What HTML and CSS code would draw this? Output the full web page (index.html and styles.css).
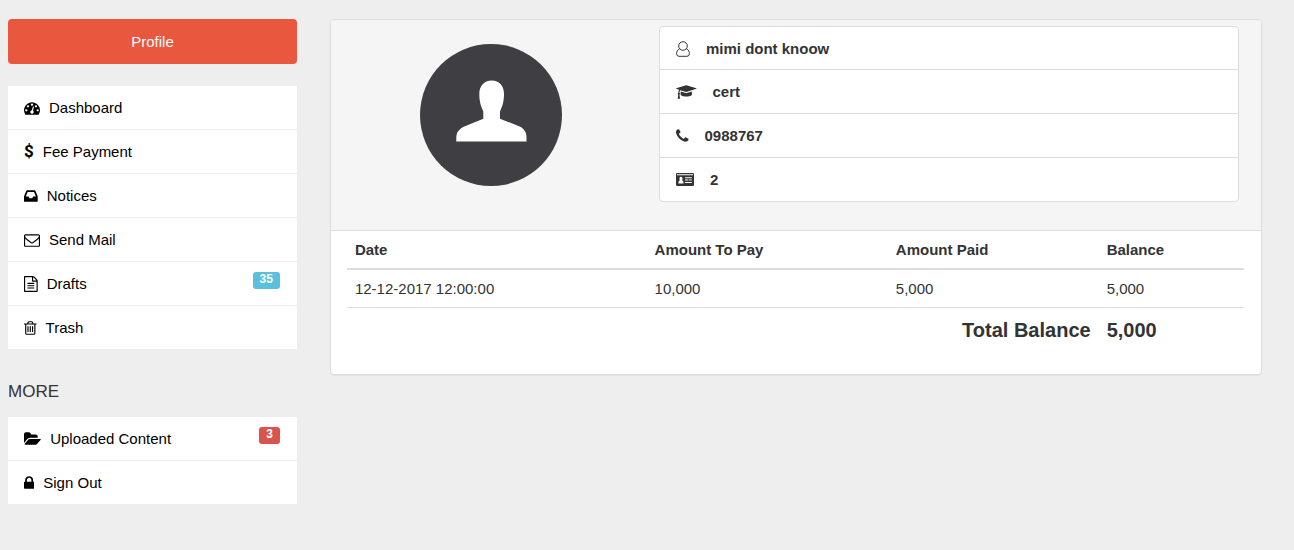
FILE: index.html
```html
<!DOCTYPE html>
<html lang="en">
<head>
    <meta charset="UTF-8">
    <meta name="viewport" content="width=device-width, initial-scale=1.0">
    <title>Profile</title>
    <link rel="stylesheet" href="styles.css">
</head>
<body>
    <div class="page">
        <aside class="sidebar">
            <button type="button" class="btn-profile">Profile</button>
            <nav class="menu">
                <a href="#">
                    <svg class="icon" viewBox="0 0 1792 1792"><path d="M384 1152q0-53-37.5-90.5t-90.5-37.5-90.5 37.5-37.5 90.5 37.5 90.5 90.5 37.5 90.5-37.5 37.5-90.5zm192-448q0-53-37.5-90.5t-90.5-37.5-90.5 37.5-37.5 90.5 37.5 90.5 90.5 37.5 90.5-37.5 37.5-90.5zm428 481l101-382q6-26-7.5-48.5t-38.5-29.5-48 6.5-30 39.5l-101 382q-60 5-107 43.5t-63 98.5q-20 77 20 146t117 89 146-20 89-117q16-60-6-117t-72-91zm660-33q0-53-37.5-90.5t-90.5-37.5-90.5 37.5-37.5 90.5 37.5 90.5 90.5 37.5 90.5-37.5 37.5-90.5zm-640-640q0-53-37.5-90.5t-90.5-37.5-90.5 37.5-37.5 90.5 37.5 90.5 90.5 37.5 90.5-37.5 37.5-90.5zm448 192q0-53-37.5-90.5t-90.5-37.5-90.5 37.5-37.5 90.5 37.5 90.5 90.5 37.5 90.5-37.5 37.5-90.5zm320 448q0 261-141 483-19 29-54 29h-1402q-35 0-54-29-141-221-141-483 0-182 71-348t191-286 286-191 348-71 348 71 286 191 191 286 71 348z"/></svg>
                    Dashboard
                </a>
                <a href="#">
                    <span class="dollar">$</span>
                    Fee Payment
                </a>
                <a href="#">
                    <svg class="icon" viewBox="128 0 1536 1792"><path d="M1151 960h316q-1-3-2.5-8.5t-2.5-7.5l-212-496h-708l-212 496q-1 3-2.5 8.5t-2.5 7.5h316l95 192h320zm513 30v482q0 26-19 45t-45 19h-1408q-26 0-45-19t-19-45v-482q0-62 25-123l238-552q10-25 36.5-42t52.5-17h832q26 0 52.5 17t36.5 42l238 552q25 61 25 123z"/></svg>
                    Notices
                </a>
                <a href="#">
                    <svg class="icon" viewBox="0 0 1792 1792"><path d="M1664 1504v-768q-32 36-69 66-268 206-426 338-51 43-83 67t-86.5 48.5-102.5 24.5h-2q-48 0-102.5-24.5t-86.5-48.5-83-67q-158-132-426-338-37-30-69-66v768q0 13 9.5 22.5t22.5 9.5h1472q13 0 22.5-9.5t9.5-22.5zm0-1051v-24.5l-.5-13-3-12.5-5.5-9-9-7.5-14-2.5h-1472q-13 0-22.5 9.5t-9.5 22.5q0 168 147 284 193 152 401 317 6 5 35 29.5t46 37.5 44.5 31.5 50.5 27.5 43 9h2q20 0 43-9t50.5-27.5 44.5-31.5 46-37.5 35-29.5q208-165 401-317 54-43 100.5-115.5t46.5-131.5zm128-37v1088q0 66-47 113t-113 47h-1472q-66 0-113-47t-47-113v-1088q0-66 47-113t113-47h1472q66 0 113 47t47 113z"/></svg>
                    Send Mail
                </a>
                <a href="#">
                    <svg class="icon" viewBox="128 0 1536 1792"><path d="M1596 380q28 28 48 76t20 88v1152q0 40-28 68t-68 28h-1344q-40 0-68-28t-28-68v-1600q0-40 28-68t68-28h896q40 0 88 20t76 48zm-444-244v376h376q-10-29-22-41l-313-313q-12-12-41-22zm384 1528v-1024h-416q-40 0-68-28t-28-68v-416h-768v1536h1280zm-1024-864q0-14 9-23t23-9h704q14 0 23 9t9 23v64q0 14-9 23t-23 9h-704q-14 0-23-9t-9-23v-64zm736 224q14 0 23 9t9 23v64q0 14-9 23t-23 9h-704q-14 0-23-9t-9-23v-64q0-14 9-23t23-9h704zm0 256q14 0 23 9t9 23v64q0 14-9 23t-23 9h-704q-14 0-23-9t-9-23v-64q0-14 9-23t23-9h704z"/></svg>
                    Drafts
                    <span class="badge badge-info">35</span>
                </a>
                <a href="#">
                    <svg class="icon" viewBox="192 0 1408 1792"><path d="M704 736v576q0 14-9 23t-23 9h-64q-14 0-23-9t-9-23v-576q0-14 9-23t23-9h64q14 0 23 9t9 23zm256 0v576q0 14-9 23t-23 9h-64q-14 0-23-9t-9-23v-576q0-14 9-23t23-9h64q14 0 23 9t9 23zm256 0v576q0 14-9 23t-23 9h-64q-14 0-23-9t-9-23v-576q0-14 9-23t23-9h64q14 0 23 9t9 23zm128 724v-948h-896v948q0 22 7 40.5t14.5 27 10.5 8.5h832q3 0 10.5-8.5t14.5-27 7-40.5zm-672-1076h448l-48-117q-7-9-17-11h-317q-10 2-17 11zm928 32v64q0 14-9 23t-23 9h-96v948q0 83-47 143.5t-113 60.5h-832q-66 0-113-58.5t-47-141.5v-952h-96q-14 0-23-9t-9-23v-64q0-14 9-23t23-9h309l70-167q15-37 54-63t79-26h320q40 0 79 26t54 63l70 167h309q14 0 23 9t9 23z"/></svg>
                    Trash
                </a>
            </nav>
            <h2 class="more">MORE</h2>
            <nav class="menu">
                <a href="#">
                    <svg class="icon" viewBox="0 0 1920 1792"><path d="M1879 952q0 31-31 66l-336 396q-43 51-120.5 86.5t-143.5 35.5h-1088q-34 0-60.5-13t-26.5-43q0-31 31-66l336-396q43-51 120.5-86.5t143.5-35.5h1088q34 0 60.5 13t26.5 43zm-343-344v160h-832q-94 0-197 47.5t-164 119.5l-337 396-5 6q0-4-.5-12.5t-.5-12.5v-960q0-92 66-158t158-66h320q92 0 158 66t66 158v32h544q92 0 158 66t66 158z"/></svg>
                    Uploaded Content
                    <span class="badge badge-danger">3</span>
                </a>
                <a href="#">
                    <svg class="icon" viewBox="320 0 1152 1792"><path d="M640 768h512v-192q0-106-75-181t-181-75-181 75-75 181v192zm832 96v576q0 40-28 68t-68 28h-960q-40 0-68-28t-28-68v-576q0-40 28-68t68-28h32v-192q0-184 132-316t316-132 316 132 132 316v192h32q40 0 68 28t28 68z"/></svg>
                    Sign Out
                </a>
            </nav>
        </aside>

        <main class="panel">
            <div class="panel-top">
                <svg class="avatar" viewBox="0 0 142 142">
                    <circle cx="71" cy="71" r="71" fill="#3e3e43"/>
                    <path fill="#fff" d="M71.7 36.5C64 36.5 59.3 42 59.3 50C59.3 58 61 62 63.3 67.5V74.7L43 83Q36.3 87 36.3 93V97.5H106.5V93Q106.5 87 101 83L80 74.7V67.5C82.3 62 84 58 84 50C84 42 79.5 36.5 71.7 36.5Z"/>
                </svg>
                <ul class="info">
                    <li>
                        <svg class="icon icon-line" viewBox="0 0 14 16"><path d="M3.6 7.8C1.2 8.600 .6 10.800 .6 12.700Q.6 15.300 3 15.300H11Q13.400 15.300 13.400 12.700C13.400 10.800 12.800 8.600 10.400 7.800"/><circle cx="7" cy="5" r="4.300"/></svg>
                        mimi dont knoow
                    </li>
                    <li>
                        <svg class="icon" viewBox="0 0 2304 1792"><path d="M1774 836l18 316q4 69-82 128t-235 93.5-323 34.5-323-34.5-235-93.5-82-128l18-316 574 181q22 7 48 7t48-7zm530-324q0 23-22 31l-1120 352q-4 1-10 1t-10-1l-652-206q-43 34-71 111.5t-34 178.5q63 36 63 109 0 69-58 107l58 433q2 14-8 25-9 11-24 11h-192q-15 0-24-11-10-11-8-25l58-433q-58-38-58-107 0-73 65-111 11-207 98-330l-333-104q-22-8-22-31t22-31l1120-352q4-1 10-1t10 1l1120 352q22 8 22 31z"/></svg>
                        cert
                    </li>
                    <li>
                        <svg class="icon" viewBox="192 0 1408 1792"><path d="M1600 1240q0 27-10 70.5t-21 68.5q-21 50-122 106-94 51-186 51-27 0-52.5-3.5t-57.5-12.5-47.5-14.5-55.5-20.5-49-18q-98-35-175-83-128-79-264.5-215.5t-215.5-264.5q-48-77-83-175-3-9-18-49t-20.5-55.5-14.5-47.5-12.5-57.5-3.5-52.5q0-92 51-186 56-101 106-122 25-11 68.5-21t70.5-10q14 0 21 3 18 6 53 76 11 19 30 54t35 63.5 31 53.5q3 4 17.5 25t21.5 35.5 7 28.5q0 20-28.5 50t-62 55-62 53-28.5 46q0 9 5 22.5t8.5 20.5 14 24 11.5 19q76 137 174 235t235 174q2 1 19 11.5t24 14 20.5 8.5 22.5 5q18 0 46-28.5t53-62 55-62 50-28.5q14 0 28.5 7t35.5 21.5 25 17.5q25 15 53.5 31t63.5 35 54 30q70 35 76 53 3 7 3 21z"/></svg>
                        0988767
                    </li>
                    <li>
                        <svg class="icon" viewBox="0 0 18 16"><rect y="1" width="18" height="13" rx="1.3"/><path fill="#fff" d="M1 2.2h16v1H1zM2.4 11.4c0-2 .6-2.8 1.4-3C3 6.5 3.700 4.800 5 4.800s2 1.700 1.200 3.600c.8.2 1.400 1 1.400 3zM9 5.200h6.800v1H9zM9 7.600h3.400v1H9zM13.200 7.600h2.600v1h-2.600zM9 10h6.800v1H9z"/></svg>
                        2
                    </li>
                </ul>
            </div>
            <div class="panel-body">
                <table class="fees">
                    <thead>
                        <tr>
                            <th class="col-date">Date</th>
                            <th class="col-due">Amount To Pay</th>
                            <th class="col-paid">Amount Paid</th>
                            <th>Balance</th>
                        </tr>
                    </thead>
                    <tbody>
                        <tr>
                            <td>12-12-2017 12:00:00</td>
                            <td>10,000</td>
                            <td>5,000</td>
                            <td>5,000</td>
                        </tr>
                    </tbody>
                    <tfoot>
                        <tr>
                            <th colspan="3" class="total">Total Balance</th>
                            <th>5,000</th>
                        </tr>
                    </tfoot>
                </table>
            </div>
        </main>
    </div>
</body>
</html>
```
FILE: styles.css
```css
* {
    box-sizing: border-box;
}
body {
    margin: 0;
    background: #eee;
    color: #333;
    font-family: "Liberation Sans", Arial, sans-serif;
    font-size: 15px;
    line-height: 21px;
}
.page {
    display: grid;
    grid-template-columns: 31fr 100fr;
    gap: 33px;
    align-items: start;
    padding: 19px 32px 32px 8px;
}

/* sidebar */
.btn-profile {
    display: block;
    width: 100%;
    margin-bottom: 22px;
    padding: 12px;
    border: 0;
    border-radius: 4px;
    background: #e9573f;
    color: #fff;
    font: inherit;
    cursor: pointer;
}
.menu {
    display: flex;
    flex-direction: column;
    gap: 1px;
}
.menu a {
    display: flex;
    align-items: center;
    gap: 9px;
    padding: 11px 17px 11px 16px;
    background: #fff;
    color: #000;
    text-decoration: none;
}
.icon {
    display: block;
    flex: none;
    height: 16px;
    fill: currentColor;
}
.icon-line {
    fill: none;
    stroke: currentColor;
}
.dollar {
    font-family: Roboto, sans-serif;
    font-size: 17px;
    font-weight: bold;
}
.badge {
    align-self: flex-start;
    height: 17px;
    margin: -1px 0 -5px auto;
    padding: 0 7px;
    border-radius: 3px;
    color: #fff;
    font-size: 12px;
    font-weight: bold;
    line-height: 15px;
}
.badge-info {
    background: #5bc0de;
}
.badge-danger {
    background: #d9534f;
}
.more {
    margin: 31px 0 13px;
    font-size: 17px;
    font-weight: normal;
    line-height: 24px;
}

/* student details */
.panel {
    border: 1px solid #ddd;
    border-radius: 4px;
    background: #fff;
    box-shadow: 0 1px 1px rgba(0, 0, 0, 0.05);
    overflow: hidden;
}
.panel-top {
    display: grid;
    grid-template-columns: 1fr 2fr;
    gap: 23px;
    padding: 6px 22px 28px 15px;
    border-bottom: 1px solid #ddd;
    background: #f5f5f5;
}
.avatar {
    width: 142px;
    margin: 18px auto 0;
}
.info {
    margin: 0;
    padding: 0;
    border: 1px solid #ddd;
    border-radius: 4px;
    background: #fff;
    list-style: none;
    font-weight: bold;
}
.info li {
    display: flex;
    align-items: center;
    gap: 16px;
    padding: 11px 16px;
}
.info li:first-child {
    padding-bottom: 10px;
}
.info li + li {
    border-top: 1px solid #ddd;
}

/* fees */
.panel-body {
    padding: 0 17px 22px 16px;
}
.fees {
    width: 100%;
    border-collapse: collapse;
}
.fees th,
.fees td {
    padding: 8px;
    text-align: left;
}
.fees thead th {
    border-bottom: 2px solid #ddd;
}
.fees tfoot tr {
    border-top: 1px solid #ddd;
}
.fees tfoot th {
    font-size: 20px;
    line-height: 28px;
}
.fees .total {
    text-align: right;
}
.col-date {
    width: 33.4%;
}
.col-due {
    width: 26.9%;
}
.col-paid {
    width: 23.5%;
}
```
